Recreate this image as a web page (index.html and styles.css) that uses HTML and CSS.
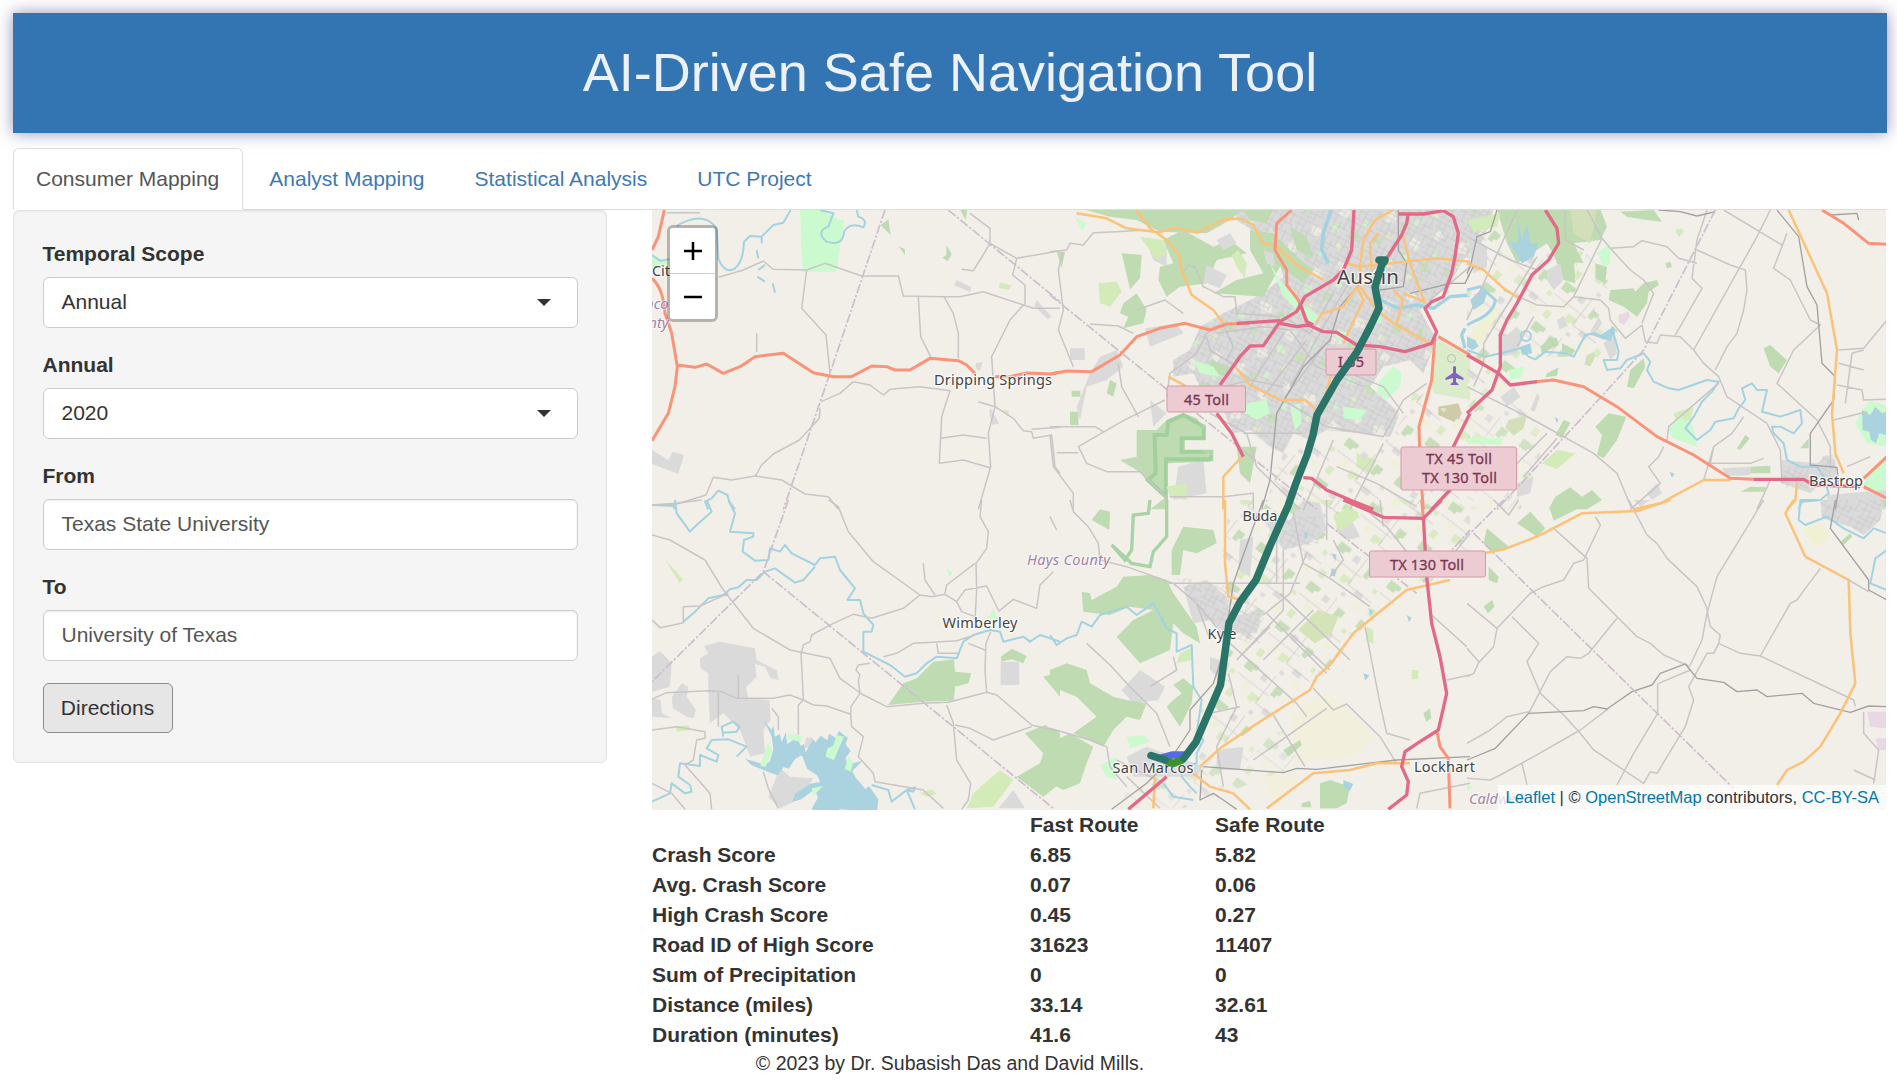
FILE: index.html
```html
<!DOCTYPE html>
<html lang="en">
<head>
<meta charset="utf-8">
<title>AI-Driven Safe Navigation Tool</title>
<link rel="stylesheet" href="styles.css">
</head>
<body>
<header class="banner"><h1>AI-Driven Safe Navigation Tool</h1></header>
<nav class="tabs">
  <a class="tab active">Consumer Mapping</a>
  <a class="tab">Analyst Mapping</a>
  <a class="tab">Statistical Analysis</a>
  <a class="tab">UTC Project</a>
</nav>
<main class="content">
  <form class="well">
    <div class="group"><label>Temporal Scope</label><div class="control select"><span>Annual</span><i class="caret"></i></div></div>
    <div class="group"><label>Annual</label><div class="control select"><span>2020</span><i class="caret"></i></div></div>
    <div class="group"><label>From</label><div class="control field">Texas State University</div></div>
    <div class="group"><label>To</label><div class="control field">University of Texas</div></div>
    <button type="button" class="btn">Directions</button>
  </form>
  <section class="results">
    <div class="map">
      <svg class="tiles" viewBox="652 210 1234 600" width="1234" height="600">
        <defs>
          <pattern id="streets" width="76" height="60" patternUnits="userSpaceOnUse" patternTransform="rotate(27)">
            <path d="M0 6H76M0 24H30M30 38H76M0 52H48M12 0V52M30 6V60M48 24V60M64 0V38" class="st"/>
          </pattern>
          <pattern id="patches" width="230" height="200" patternUnits="userSpaceOnUse" patternTransform="rotate(24)">
            <path d="M10 20l34-8 12 26-30 14zM120 60l30 4-6 30-28-8zM60 150l26-6 14 22-30 12zM180 10l24 6-8 24-20-6z" fill="#ecebe2"/>
            <path d="M70 30l22-8 8 20-18 10zM170 120l26-10 10 24-24 12zM20 100l18 4-4 22-18-6z" fill="#c8e0ba"/>
            <path d="M110 120l20-6 10 20-22 8zM200 70l16 4-4 18-16-4zM110 5l16 4-6 16-14-4z" fill="#d0f2cd"/>
            <path d="M150 165l16 4-6 16-14-6zM50 75l14 6-6 14-14-6z" fill="#e3edc6"/>
          </pattern>
          <pattern id="fields" width="190" height="150" patternUnits="userSpaceOnUse" patternTransform="rotate(38)">
            <path d="M5 8h40v14l-12 4v10H5zM120 20h26v20l-10 4v10h-16z" fill="#c6dfb8"/>
            <path d="M70 80h34v16l-14 2v8H70zM10 110h20v25H10zM170 60h14v14h-14z" fill="#daebc3"/>
            <path d="M130 95h28v18h-28zM65 15h20v20H65zM100 125h14v12h-14z" fill="#dddcda"/>
            <path d="M35 65h20v24H35zM150 125h26v18h-26z" fill="#eff0d8"/>
            <path d="M0 60H120M100 0V100M100 100H190" class="st"/>
          </pattern>
        </defs>
        <rect x="652" y="210" width="1234" height="600" fill="#f2efe9"/>

        <!-- land cover, west -->
        <g transform="translate(640 200) scale(.33333)">
          <path class="park" d="M480 28H545L600 60H612L590 215H487zM36 170L88 185V205H36z"/>
          <path class="wood" d="M722 75L745 58L752 105zM775 138l20 10v18zM920 135l15 28-12 20-16-10 12-8zM960 28h22l-5 32z"/>
          <path class="town" d="M36 750L85 780L98 755L132 765L115 822L36 792zM950 240l45 22-5 14-48-20zM1190 300l45 50-12 8-40-40zM1008 490l20-4-8 26-14-6zM1052 625l25 45-20 5-10-40z"/>
          <path class="grass" d="M1080 248l34 8-8 14-30-6zM1088 628l20 6-5 16z"/>
        </g>
        <g transform="translate(640 500) scale(.33333)">
          <path class="town" d="M180 475L205 460 192 438 240 425 345 445 350 480 385 498 410 512 416 540 392 535 375 500 345 492 350 530 318 562 325 595 388 600 392 660 370 690 375 760 330 770 318 735 300 690 250 640 210 670 205 580 205 520 182 505zM36 470L60 452 95 490 90 560 36 575zM36 595L62 600 65 640 96 655 36 650zM96 590L125 550 145 560 140 590 168 630 160 655 140 650 98 625zM420 805L450 830 520 835 480 895 420 925 385 890zM500 710l25 14-5 22-28-4zM1082 485h56v70h-56zM1075 925L1120 870 1155 925z"/>
          <path class="water" d="M370 660l25 30 5-15 5 35 15-8 5 25 12-30 5 35 30-20 10 25 10-5 5 25 20-35-10-15 20 20 15-20 20 14 5-20 20 12 10-20 25 20 5-10-10 30 15 20-15 20 5 20 45-10-30 30 10 20 30 35 10-10 28 40-6 60-30 22-30-20-20-30-30-2-25 12-60-12 20-35-10-25-40 30-28 8 10-25 45-30 30-5-10-20-30-20-15-40-20 10-20 30-15-5-18 25-28-10-50-20-20-20 60 18 15-10 10-35-5-40z"/>
          <path class="park" d="M385 725l12 30-20 45-16-2zM440 700l50 10-10 15-35-8zM590 705l22 5-20 45-10 25-25-10 5-25 18-8zM625 770l15 15-8 30-18-8zM515 865l35-8-30 30zM1060 325l15 35-30-5zM920 205l18 15-10 10z"/>
          <path class="wood" d="M745 615L790 550 830 535 880 485 942 478 945 515 994 520 985 550 945 560 942 602 850 605zM1082 470L1115 446 1160 468 1150 490 1115 478 1085 485zM1210 530L1260 515V590zM1155 700L1215 675 1260 700V850L1210 890 1130 830 1200 790 1210 760z"/>
          <path class="grass" d="M1080 810L1120 840 1060 920 980 925 1000 880zM108 680l40-4 2 14-40 5zM840 880l35-12 15 14-30 8zM75 178l55 62-12 8z"/>
        </g>

        <!-- land cover, Austin corridor -->
        <g transform="translate(1050 200) scale(.33333)">
          <path class="town" d="M560 28H1330L1300 120 1240 180 1200 250 1110 330 1160 420 1120 520 1080 480 1000 500 960 560 1050 640 1020 710 930 700 830 690 780 720 730 700 700 760 660 740 600 690 550 700 510 610 450 560 430 520 370 530 370 480 420 450 450 380 520 340 640 280 700 230 680 140 560 60zM285 385L380 370 400 400 300 440zM150 470L200 450 220 500 170 540 110 560 90 660 80 620 120 520zM60 445h44v35H60zM290 130L350 140 350 200 310 180zM385 800L460 780 470 880 370 900zM350 640L300 600 310 680z"/>
          <path d="M560 28H1330L1300 120 1240 180 1200 250 1110 330 1160 420 1120 520 1080 480 1000 500 960 560 1050 640 1020 710 930 700 830 690 780 720 730 700 700 760 660 740 600 690 550 700 510 610 450 560 430 520 370 530 370 480 420 450 450 380 520 340 640 280 700 230 680 140 560 60z" fill="url(#patches)"/>
          <path d="M560 28H1330L1300 120 1240 180 1200 250 1110 330 1160 420 1120 520 1080 480 1000 500 960 560 1050 640 1020 710 930 700 830 690 780 720 730 700 700 760 660 740 600 690 550 700 510 610 450 560 430 520 370 530 370 480 420 450 450 380 520 340 640 280 700 230 680 140 560 60z" fill="url(#streets)"/>
          <path class="wood" d="M100 28H580L540 60 470 100 330 95 260 60 180 50zM340 120L400 90 490 140 540 120 590 160 500 180 470 250 390 260 350 290 325 240 330 200 370 190zM215 160L275 165 270 235 240 268zM220 310L260 280 290 330 280 370 220 385 235 350 210 340zM20 155h25l-10 50zM600 90L670 100 740 170 790 210 760 250 690 200 640 290 490 280 560 240 640 220 600 150zM580 30H670L650 70 600 60zM720 80l50 30 20 60-50-20zM65 572h26v18H65zM60 635h25v40H60zM180 540l20 10-10 40-20-10zM480 480l60 20-10 30-50-15z"/>
          <path class="town" d="M470 195l60 30-20 40-50-20zM640 150l30 10 5 40-25-10zM500 120l40-20 20 30-40 20z"/>
          <path class="wood" d="M260 690H320L350 660 400 640 440 655 465 690V720H405V750H455L488 770 480 785 350 790V900L290 845 275 820 210 780 260 770zM560 740L620 740 600 850 570 820zM300 928L350 890V928z"/>
          <path class="reserve" d="M314 705H350L355 665 400 645 462 680V715H395V755H484V778H348V890L294 840 317 820z"/>
          <path class="grass" d="M145 250L200 245 215 275 180 320 150 310zM545 165L565 150 590 190 585 235 560 200zM270 110L340 120 350 160 320 180zM350 860L410 850 410 900 360 890zM920 760l60 20-20 40-40-20z"/>
          <path class="park" d="M660 190L690 240 740 300 810 350 790 370 740 330 700 290zM590 610L650 600 660 640 620 660 585 640zM990 540L1030 500 1055 520 1050 560 1010 600 980 580zM720 620l30-10 5 60-20 20zM880 620l70 10-20 30-50-5zM430 480l60 20 20 30-60-10zM860 390l40 10-10 25-30-10zM75 50l35 20-15 22z"/>
          <path d="M1165 420L1260 470V600L1150 580 1140 520z" fill="#dbeccb"/><path d="M1165 620l60-10 10 30-15 30-55-25z" fill="#cfcba7"/>
          <path d="M700 760L850 700 1020 720 1060 650 1100 560 1160 620 1260 640V928H640z" fill="url(#fields)"/>
          <path class="river" style="stroke-width:11" d="M843 30 820 100 815 150 835 190"/>
          <path class="river" style="stroke-width:10" d="M990 300L1045 325 1100 315 1150 325 1200 290 1260 285M1245 385l-10 20 10 40"/>
        </g>
        <g transform="translate(1050 500) scale(.33333)">
          <path d="M540 0H1260V200L1100 260 940 380 830 510 720 610 560 720 450 780 420 700 560 400 500 300z" fill="url(#fields)"/>
          <path d="M520 760L700 690 760 760 700 815 400 925H180L300 820z" fill="url(#fields)" opacity=".7"/>
          <path d="M720 640l110-60 60 40 80 90-60 60-170 20zM640 830l120-10-90 90z" fill="#f2f0dc"/>
          <path class="town" d="M400 260L470 240 530 290 540 350 640 330 620 400 530 400 480 360 430 370zM640 60L720 60 760 0 810 10 830 90 780 130 700 150zM570 120L610 110 600 230 565 210zM215 570L270 510 345 560 325 600 250 610zM30 760l50-30 15 15-50 40zM500 750l80-10-10 70H500zM230 770L290 740 460 800 440 830 250 830zM860 60l50 10 20 40-40 10-30-25zM480 470l60 20-20 60-40-40z"/>
          <path d="M380 230L540 260 650 340 600 430 480 380zM660 50H810V130L700 150z" fill="url(#streets)"/>
          <path class="wood" d="M95 275L120 280 125 300 200 260 220 230 300 225 350 240 370 280 440 380 450 430 400 400 370 370 360 450 270 490 200 410 250 360 310 330 240 320 180 345 100 335zM0 510L50 490 110 510 120 550 190 590 230 600 290 610 270 660 230 650 190 690 160 740 70 700 140 650 80 590 30 570 0 550zM370 600L395 580 370 555 400 535 430 560 425 610 390 680 350 620zM0 730L60 700 130 740 110 790 90 850 40 870 0 850zM810 850L840 840 900 860 890 910 860 925H810zM125 60L150 28 180 35 178 90zM365 150L400 80 490 90 500 130 440 160 400 150 390 225H365zM1120 640l20-15 4 30-15 10zM700 750l50-30 5 15-40 35zM755 910l25-8 5 20h-30z"/>
          <path d="M745 390l60-60 60 20-20 50-50 30z" fill="#d5e3b8"/>
          <path class="grass" d="M850 50L900 15 930 50 870 95zM390 460L430 440 425 480 380 490zM1085 510h20v28h-20zM950 380l20 10v42l-20-10z"/>
          <path class="park" d="M150 795L200 770 200 840 170 830zM230 710l50-5 20 20-60 20z"/>
          <path class="reserveline" d="M300 0L295 40 250 45 245 150 225 180 185 135 245 190 300 200 310 155 350 110 350 0"/>
          <path class="water" d="M845 205l15 5-5 20-14-4zM845 160l15 4-4 20zM955 325l15 8-8 14zM1070 345l15 8-8 14zM940 520l18 6-12 16zM880 840l30 12-10 20-20-10zM760 95l14 8-6 16z"/>
          <path class="river" d="M0 405L20 435 50 415 80 405 95 365 125 380 150 345 230 320 260 345 310 310 350 385 380 400V455L425 435 430 560 455 600 440 700 460 720 440 760 440 790 400 800 395 830 420 860 440 880M340 850L370 890 430 900"/>
        </g>

        <!-- land cover, east -->
        <g transform="translate(1467 200) scale(.33333)">
          <path d="M0 60H240L330 120 430 250 380 330 450 390 440 470 180 470 100 560 0 560z" fill="url(#fields)"/>
          <path d="M0 560L100 520 240 720 160 928H0z" fill="url(#fields)" opacity=".8"/>
          <path class="wood" d="M90 28H400L420 80 400 120 320 130 350 190 270 180 240 130 150 190 120 130zM250 140L320 170 325 250 290 240zM430 270L500 265 505 275 530 250 570 240 575 255 545 275 540 310 510 350 470 320 425 300zM385 190L420 200 415 250 385 235zM480 560L490 510 530 475 535 500 500 565zM385 680L425 640 478 650 450 720 410 775 390 765 405 705zM265 705L290 660 310 668 285 715zM245 928L265 890 310 862 345 890 375 870 405 900 360 928zM890 445L910 435 960 480 935 520 910 500zM810 745L835 705 848 715 820 750zM850 800L910 797V820H850zM820 875L850 860 900 862 890 875zM460 35L560 30 585 65 540 60 480 50zM595 190l15-5 5 15-15 5zM1000 745l25-30v30zM220 440l30-30 20 5 5 20-50 25zM285 430l40 20-10 15-30-15zM240 520l35-18-5 25-35 5z"/>
          <path d="M310 30L390 28 370 130 320 100zM360 465l20-8 5 12-15 30-18-5zM125 660l55-15-10 40-30 22-25-25z" fill="#d3dfb8"/>
          <path class="grass" d="M225 790L270 750 325 760 270 808zM620 640L680 620 670 660 630 670zM0 60L100 40 90 80 20 95zM945 800l80 5 10 35-70 5zM625 90l20-5 5 12-15 15z"/>
          <path class="park" d="M600 690L640 650 680 680 690 740 620 715zM390 160L430 130 430 190 410 200zM125 510L170 500 165 530 130 540zM1180 640L1210 600 1260 620V740L1200 730 1165 670zM1190 850L1260 760V885L1200 870zM0 715L110 715 100 735 0 730z"/>
          <path class="town" d="M240 210L280 190 290 240 260 270 240 240zM410 430L440 400 450 460 430 480zM370 395L395 350 405 370 380 410zM100 590L140 560 160 590 120 620zM150 850L200 830 190 880 150 890zM0 100L60 140 60 200 20 220zM100 420l50-40 20 30-20 50-50 10zM270 360l20-12 12 30-25 10zM190 630l20-50 8 10-15 45zM540 880l30-30 15 30-30 20zM765 805L850 800 850 825 780 828zM945 780L1050 790 1080 765 1105 780 1110 860H1050L1030 880 945 850zM1080 885L1260 870V928H1080z"/>
          <path d="M455 345l30-10 5 15-20 25-15-10z" fill="#e8d8e6"/>
          <path d="M0 420L70 320 100 330 60 400 30 440z" fill="#f0f0d2"/>
          <path d="M1065 765h45v70h-45zM945 800h80v65h-80z" fill="url(#streets)"/>
          <path class="water" d="M150 50L165 120 180 70 190 130 215 130 200 170 165 190 125 125 155 130zM1185 630l25 15 15-25 20 20 12-5v70l-20-5-10 30-15-10-5-25-20-5zM160 440l30-10 5 30-30 5zM360 400l40 5 40-25 5 20-30 20zM608 815l15 6-8 12zM262 650l12 8-4 12zM10 300l30-30 20 10-10 30-30 20zM0 410l25 10 10 20-20 10-15-10z"/>
          <circle class="river" cx="177" cy="408" r="15"/>
          <path class="river" style="stroke-width:9" d="M0 270L40 260 85 300Q80 340 20 365L0 375"/>
          <path class="river" d="M0 450L55 470 120 455 160 445 185 470 205 478 235 455 295 460 320 470 355 405 385 400 430 420 435 385 455 455 450 480 410 480 420 510 460 505 480 480 530 460 550 485 540 510 560 545 605 565 635 570 720 540 755 545 735 575 705 605 680 650 655 685 690 720 730 690 745 665 800 655 815 625 835 600 825 565 855 550 870 570 900 570 885 635 940 650 1000 630 1005 670 980 700 940 680 915 680 920 700 950 730 960 780 1000 800 1050 800 1070 830 1085 880 1060 900 1005 905 995 928"/>
        </g>
        <g transform="translate(1467 500) scale(.33333)">
          <path class="wood" d="M250 30L260 0H360L325 30 260 62zM50 130L60 85 95 115 125 140 80 155zM150 70L190 35 235 85 210 110zM65 200l30 30-5 20-25-10zM50 320l25-20 8 20-20 20zM1120 125l30-25 5 10-25 25zM1240 0h20v20h-20z"/>
          <path class="town" d="M1060 0H1250L1240 60 1190 105 1150 80 1065 55zM500 0h50l-30 20z"/><path d="M1060 0H1250L1240 60 1190 105 1150 80 1065 55z" fill="url(#streets)"/>
          <path d="M1200 635h60v50l-50-5zM1225 715h35v35h-25z" fill="#e8d8e6"/><path d="M1000 90l60-20 30 40-40 30z" fill="#f0f0d2"/>
          <path class="park" d="M0 852l18 8-18 15z"/>
          <path class="river" d="M1055 0L1000 0 995 60 1015 75 1080 50 1130 85 1190 115 1220 85 1260 100M1260 150L1225 175 1210 250 1260 270"/>
        </g>

        <!-- streams and roads, west -->
        <g transform="translate(640 200) scale(.33333)">
          <path class="river" d="M36 165L60 182 88 178M110 78Q190 30 230 85L235 175Q255 225 285 205Q310 185 312 125L330 108 365 110 400 75 430 68 452 30M365 110V130M350 150L355 175M355 210L375 195M352 230L375 245M398 250L405 278M540 30L580 40 565 80Q525 95 560 125Q610 140 612 95Q630 65 670 82Q685 60 655 50L650 30M205 928L195 905 215 895 235 872 262 885 268 905 285 928M36 915L100 918 105 928"/>
          <path class="minor" d="M236 232L310 210 370 183 400 208 500 210 555 190 665 228 775 228 790 288 910 290 960 290 1030 275 1180 325H1260M500 210L485 325 558 405 570 520M835 290L842 410 872 470M912 290L940 340 955 400V475M990 40L1050 85V130L1020 180 1000 212 965 208M1050 130L1130 175 1260 152M1130 175L1118 225 1155 255V310L1110 360 1055 470 1065 620 1045 700 1052 800 1015 928M1065 620L1120 655 1150 692 1175 695 1180 715 1235 705 1245 800 1260 820M640 545L690 555 730 585 750 568 840 560 930 572 905 650 898 790 970 780 1050 803M902 715L970 705 1040 715M1015 605L1065 620M1175 688L1260 682M640 545L600 580 543 605M540 625L538 655 478 720 400 762 365 795 345 830M36 915L110 912 198 885 220 832 275 840 345 828 425 840 495 882 565 890 595 928M350 400V455M80 38H180"/>
          <path class="admin" d="M735 30L570 520 430 928M925 30L1260 305"/>
          <path class="trunk" d="M73 30L55 110 36 150M36 235Q70 265 75 340L95 400 112 500 105 560 85 640 36 722M112 495L165 502 200 492 250 520 300 500 345 470 430 460 520 518 580 530H635L695 498 740 500 765 510H810L870 475 955 482 980 495 1005 520M1065 530H1110L1160 519 1230 522 1260 517"/>
        </g>
        <g transform="translate(640 500) scale(.33333)">
          <path class="river" d="M105 0L110 40 150 95 170 75 215 35 200 0M265 0L285 40 270 95 340 100 340 110 312 120 308 155 345 182 385 180 390 145 420 155 435 135 455 160 525 195 540 175 585 170 600 210 645 265 622 300 660 300 670 340 700 375 695 395H670V455L750 495 795 530 830 520 860 490 890 470 950 475 970 425 1000 405 1050 390 1080 395 1090 425 1150 410 1170 425 1200 405 1260 425M375 215L405 205 465 248 490 240 525 200M375 215L350 240 320 240 295 262 270 268 250 285 205 295 165 335 130 365M36 905L90 880 95 850 135 880 155 875 150 855 115 830 120 790 180 798 180 765 230 785 235 765 200 745 215 720 265 718 320 740 290 770M250 710L245 680 280 665 298 680 290 695 250 698M695 855L745 870 755 905 800 870 825 862 820 875 800 870 825 928"/>
          <path class="minor" d="M36 15L110 10 185 0M36 105L90 120 195 180 250 270 340 385 450 450 570 475 600 535 665 582 740 620 850 610 925 607 1040 577 1070 585 1175 675 1260 695M565 0L595 20 625 95 700 185 840 285 875 290 915 283 950 305 965 335 1005 350M1025 0L1020 50 1045 95 1040 145 1008 190 1010 270 1005 360M850 190L855 240 885 285M915 280L920 255 1005 190M950 305L975 270 1040 258 1075 330M1075 335L1120 298 1190 325 1200 255 1240 215M36 360L60 383 100 375 130 368V320L180 318 265 280M485 455L490 435 510 425 515 405 580 370 640 343 695 355 790 325 840 285M483 455L490 600 475 615V705M36 597L80 578 205 572 245 575 290 595H400L450 585 490 600 520 615 560 618 632 643 633 620 660 580 655 540 660 525 648 510 655 495 690 490M632 643L635 680 670 710 655 770 700 820 705 845 850 870 910 925M730 470L770 460 820 430 880 427 950 422 1005 405M890 430L895 460H960M985 430L1035 450M1052 395L1038 430 1035 510 1040 577M920 615L940 670 950 780 992 850 985 900 965 928M945 675L990 685 1060 720 1175 680M36 690L110 680 195 695V715L170 720 160 780 135 795 210 880 215 928M370 815L385 865 415 925M36 850L95 880 135 928M295 525V595M235 580V680M395 625L415 650V690"/>
          <path class="admin" d="M445 0L370 215 36 545M370 215L1240 925"/>
        </g>

        <!-- roads, Austin -->
        <g transform="translate(1050 200) scale(.33333)">
          <path class="minor" d="M0 155L50 150 60 130 100 135 130 98 200 95 280 90M40 150L25 210 40 330 25 390 70 500M120 372L205 378 250 400M205 490L215 560 265 650M0 680H135L160 695M345 600L220 662 85 740 110 790 170 815H270L350 895M0 705L10 800 70 880V928M20 758H85M350 590L360 520 440 460 470 400 520 370M400 215L415 195 435 200 460 260 520 290 555 290 560 340 690 350M560 500L480 450 470 410M520 375L550 440 530 480 600 540 700 560M700 400L600 560M770 420L640 590M820 440L700 600 830 680M900 240L720 560M1040 130L980 250M1260 200L1140 300M480 640L590 700 620 800 750 928M580 700L760 700M950 400L900 520 1000 560 1060 640M830 680L1000 710 1060 600 1130 550M850 280L780 400 700 350M760 930L850 720M900 928L1000 730M1100 920L980 850 860 800M360 890H520L610 880 610 928M260 330L345 300 400 340M500 400L640 380 720 390 800 500 940 560M600 540L520 560"/>
          <path class="rail" d="M1045 30V150L1070 190 1060 260 990 270M930 250L870 320 840 420 760 500 680 640 660 840 635 928M1080 280L1200 250 1245 250 1270 200"/>
          <path class="admin" d="M0 285L340 560 540 720 800 928"/>
          <path class="primary" d="M80 40L170 55 230 85 325 97 380 83 440 98 520 60 570 55 610 75 640 130 675 135 740 195 820 240M258 30L300 85 350 120 385 160 395 210 425 285 490 330 520 370M355 530L410 560M560 505L600 555 690 600H765L800 630M520 928V830L580 765M1030 30L975 60 940 120 930 200 930 260 980 330 1030 370 1140 430M985 100L960 130 965 210M1060 110L1080 190 1125 310M890 190L930 200 1160 175 1260 185M820 340L880 320 920 260 940 300 880 430M820 335L800 365M1030 270L1060 300 1040 370M1060 280L1125 305M850 500L820 610"/>
          <path class="trunk" d="M0 523L50 513 125 515 210 465 260 410 330 385 405 370 480 390 530 372 600 370M725 30L680 70 675 150 710 210 710 255 745 300 770 365M1165 410L1260 465M1155 410L1145 540 1107 680 1110 800 1120 928"/>
          <path class="mway" d="M560 370L690 362M690 370L740 380 775 375 820 395 860 397 920 435 990 440 1065 455 1145 430 1160 395 1125 325 1145 305 1180 290 1205 220 1215 170 1225 100 1210 50 1180 32 1120 42 1045 42M1075 40L1070 70 1055 105 1000 190M912 30L905 150 880 210 850 240 765 290 740 335 690 365 640 437 600 438 570 470 510 555M750 310L770 365 790 375M500 640L545 700 580 770M760 833L785 835 830 870 900 900 970 928M1260 640L1210 740 1200 870 1145 928"/>
        </g>
        <g transform="translate(1050 500) scale(.33333)">
          <path class="minor" d="M60 0L70 35 115 80 145 130 150 180 230 200 370 250 440 310 540 430M355 250H750M440 310L480 420M540 430L740 610 770 650M110 430L180 495 240 560 320 640 360 740M370 470L380 510 300 560M0 685L120 720 170 740 180 800 230 860M640 345L720 280 770 160M700 150V330L560 480M830 0V120M680 100V250M730 40L760 190 840 235 960 320M850 120L880 180 840 230M960 40L1010 80 1090 180M690 280L900 480M790 330L640 480M650 340L830 520M560 480L660 380M840 510L720 400M945 380L990 610 1010 700 1080 720M790 565L850 630 890 612 990 710 1040 790M830 625L610 780M670 645L765 800M535 520L560 620 500 740 520 860M1145 345L1250 440M1180 200L1260 100M1000 80L990 0M0 50L20 90M1190 540L1260 525M480 640L570 620M230 830L330 925M200 780L320 840M1100 925L1110 880 1260 850"/>
          <path class="rail" d="M640 0L610 80 550 250 520 460 490 550 420 630 420 690 360 780 290 850 185 928M460 800L700 818 740 805 800 808 1040 780 1260 770M455 810L450 900 490 880 520 900 560 928"/>
          <path class="admin" d="M830 70L1100 280M1120 245L1260 90"/>
          <path class="primary" d="M525 0V190L535 290 570 300M310 925L315 830M430 820L480 860 550 880 600 928M650 925L790 820 900 810 980 790H1080M450 800L510 745 630 665 780 570 800 530 840 495 910 400 1070 270 1200 240"/>
          <path class="trunk" d="M1115 0L1120 50M1160 690L1170 740 1195 775 1200 925"/>
          <path class="mway" d="M235 928L350 830M880 0L970 38 1000 52 1120 55 1175 0M1120 50L1130 230 1145 370 1170 470 1190 580 1165 690 1110 725 1065 755 1055 800 1075 845 1070 885 1015 928"/>
        </g>

        <!-- roads, east -->
        <g transform="translate(1467 200) scale(.33333)">
          <path class="minor" d="M150 30L0 360M360 30L405 115 320 290 290 320 210 315M0 110L130 180 210 210M405 115L430 145 500 140 525 122 600 140 635 175 690 190M430 145L490 210 530 240 560 280 525 370M210 315L110 270M320 290L400 300 425 325 430 360 475 415 525 375 535 425 570 430 580 405 640 410 680 450 710 490 755 530 780 590 900 670 940 750 945 850M720 30L690 120 675 235 705 265 625 405M690 150L790 195 835 210 840 270 830 330 810 400 780 440 745 510M910 30L870 110 680 450M770 30L945 135M960 100L920 205 970 240 1030 360 1060 375 980 450 930 550 1050 660 1090 740V800M755 550L650 640 605 680 600 720M830 650L795 700 740 740 730 790H850L890 775M740 740L710 840M590 740L575 770 545 800 580 850 490 928M0 560L200 660 380 760 450 820 495 928M50 490L20 560M270 715L170 830M240 700L140 800M1115 450L1190 445 1260 360M1115 490L1190 510M1110 555L1185 570 1190 600 1260 598M1190 450L1155 460 1135 610M1100 660L1200 635M1140 800L1210 770M910 840L870 928M210 170L50 430 50 490M295 30V120L350 150M200 350L150 440"/>
          <path class="rail" d="M90 30L70 95 30 110 10 200 0 220M575 30L640 35 690 48 745 35M930 30L995 110 1020 260 1050 315 1065 490 1105 530 1100 600 1030 700V795L1110 802 1115 870 1105 928M1090 45L1170 40 1175 60"/>
          <path class="admin" d="M745 30L530 450 330 670 90 928"/>
          <path class="primary" d="M0 190L50 210 110 265 155 295M965 30L1080 280 1110 450 1095 640 1105 760 1130 820M500 928L580 910 710 840 790 840M990 850L985 900 960 928"/>
          <path class="trunk" d="M0 465L50 490M205 545L260 540 350 560 450 620 570 710 680 765 790 835 860 838M1190 835L1260 770M1190 860L1260 895M1065 30L1130 70 1205 130 1260 133"/>
          <path class="mway" d="M0 465L95 520 130 555 210 545M235 30L270 85 275 130 245 180 195 225 150 310 120 360 100 405V500L75 570 0 640M860 838H1010L1040 855 1180 860"/>
        </g>
        <g transform="translate(1467 500) scale(.33333)">
          <path class="minor" d="M260 85L360 175 365 265 510 410 550 430 590 465 670 500M485 0L540 105 570 130 600 175 690 260 718 320 730 380 760 405 755 430 820 460 880 468 1160 600 1165 620M890 0L750 230 720 340 705 420 670 495M385 50L400 75 350 180 320 190 290 240 225 262 190 280 90 385 80 440 35 488 20 520 0 530M0 310L90 385M0 445L38 488M135 350L215 430 180 485 220 580 290 645 340 700 380 750 530 850 550 815 570 820 655 680 680 600 665 560 720 460 740 460 755 430M450 355L365 460 340 475 300 470 250 515 185 640M185 635L120 650 70 690 0 730M425 625L340 690 200 770 100 825 70 840 0 835M165 790L180 855M572 550V640L500 760 450 855M670 510L575 550M1060 205L1015 265 990 300 970 310 880 468M1190 635V700L1235 750 1220 850M1145 240L1205 275M1160 810L1225 840M80 0L125 45 155 0"/>
          <path class="rail" d="M1105 0L1090 85 1205 240V270L1260 300M0 780L85 745 185 640 350 632 380 620 420 627 495 575 555 555 580 520 655 492 690 535 770 547 810 575 870 570 900 590 1005 580 1040 610 1150 637 1205 618 1260 620"/>
          <path class="admin" d="M110 0L15 95 800 865"/>
          <path class="primary" d="M50 160L110 148 210 110 345 40 510 33 610 0M980 0L955 40 1015 170 1145 240 1150 400 1165 550 1120 640 1060 740 1010 785 960 810 930 855"/>
        </g>

        <!-- highway shields -->
        <g class="shield">
          <rect x="1167" y="386" width="78.500" height="26" rx="2"/><rect x="1326" y="349" width="50" height="26" rx="2"/>
          <rect x="1401" y="447" width="115.500" height="43" rx="2"/><rect x="1369.500" y="551" width="116" height="26" rx="2"/>
        </g>
        <g class="shieldtext">
          <text x="1184" y="404.500" textLength="45">45 Toll</text><text x="1338" y="367" textLength="26">I 35</text>
          <text x="1426" y="464" textLength="66">TX 45 Toll</text><text x="1422" y="482.500" textLength="75">TX 130 Toll</text>
          <text x="1390" y="570" textLength="74">TX 130 Toll</text>
        </g>
        <g class="place">
          <text x="934" y="385" textLength="118">Dripping Springs</text>
          <text x="942.500" y="628" textLength="75">Wimberley</text>
          <text x="1242.500" y="521" textLength="35">Buda</text>
          <text x="1207.500" y="639" textLength="29">Kyle</text>
          <text x="1112.500" y="773" textLength="81">San Marcos</text>
          <text x="1414" y="772" textLength="61">Lockhart</text>
          <text x="1809" y="486" textLength="54">Bastrop</text>
          <text x="640" y="276">a City</text>
          <text class="city" x="1337" y="284" textLength="62">Austin</text>
        </g>
        <g class="county">
          <text x="1027" y="565" textLength="83">Hays County</text>
          <text x="637" y="309">anco</text><text x="632" y="328">ounty</text>
          <text x="1469" y="804">Caldwell</text>
        </g>
        <path transform="translate(1454.500 375)" fill="#8461c4" d="M-1.500-8Q0-10 1.500-8V-2L9 3V5L1.500 3V7L4 9V10H-4V9L-1.500 7V3L-9 5V3L-1.500-2z"/>
        <circle cx="1451.500" cy="358.500" r="4" fill="none" stroke="#bbb"/>

        <!-- routes -->
        <path class="route fast" d="M1161 758L1172 755 1185 755"/>
        <path class="route green" d="M1165 760L1173 763.500 1182 760"/>
        <path class="route" d="M1151 755.500L1165 760M1184 758L1196 742 1208 714 1220.500 685 1224 660 1229 623 1240 602 1256 580 1270 546 1288 506 1296 483 1307 455 1313 435 1317 415 1337 380 1357 352 1371 325 1379 308 1375 287 1382 264 1384 262 1379 260 1385 260"/>
      </svg>
      <div class="zoom"><a><svg width="18" height="18"><path d="M9 0V18M0 9H18"/></svg></a><a><svg width="18" height="18"><path d="M0 9H18"/></svg></a></div>
      <div class="attribution"><a>Leaflet</a> | © <a>OpenStreetMap</a> contributors, <a>CC-BY-SA</a></div>
    </div>
    <table class="scores">
      <tr><th></th><th>Fast Route</th><th>Safe Route</th></tr>
      <tr><th>Crash Score</th><th>6.85</th><th>5.82</th></tr>
      <tr><th>Avg. Crash Score</th><th>0.07</th><th>0.06</th></tr>
      <tr><th>High Crash Score</th><th>0.45</th><th>0.27</th></tr>
      <tr><th>Road ID of High Score</th><th>31623</th><th>11407</th></tr>
      <tr><th>Sum of Precipitation</th><th>0</th><th>0</th></tr>
      <tr><th>Distance (miles)</th><th>33.14</th><th>32.61</th></tr>
      <tr><th>Duration (minutes)</th><th>41.6</th><th>43</th></tr>
    </table>
  </section>
</main>
<footer class="footer">© 2023 by Dr. Subasish Das and David Mills.</footer>
</body>
</html>
```
FILE: styles.css
```css
* { box-sizing: border-box; }
body {
  margin: 0;
  padding: 13px 10px 0 13px;
  height: 1086px;
  overflow: hidden;
  background: #fff;
  color: #333;
  font: 21px/30px "Liberation Sans", Arial, sans-serif;
}
.banner {
  height: 120px;
  display: flex;
  justify-content: center;
  background: #3375b3;
  box-shadow: 0 0 15px rgba(40, 40, 110, .5);
}
.banner h1 {
  margin: 0;
  padding-top: 29px;
  font-size: 54px;
  line-height: 60px;
  font-weight: 400;
  color: #ebf1f7;
}
.tabs {
  display: flex;
  gap: 3px;
  margin-top: 15px;
  height: 62px;
  border-bottom: 1px solid #ddd;
}
.tab {
  height: 62px;
  padding: 15px 22.5px;
  border: 1px solid transparent;
  border-radius: 6px 6px 0 0;
  color: #3f78b3;
  white-space: nowrap;
}
.tab.active {
  padding-left: 22px;
  color: #555;
  background: #fff;
  border-color: #ddd #ddd #fff;
}
.content { display: flex; justify-content: space-between; }
.well {
  width: 594px;
  height: 553px;
  padding: 27.5px 28.5px;
  background: #f5f5f5;
  border: 1px solid #e3e3e3;
  border-radius: 6px;
  box-shadow: inset 0 1px 2px rgba(0, 0, 0, .05);
}
.group { margin-bottom: 22px; }
.group label { display: block; font-weight: 700; margin-bottom: 8px; }
.control {
  height: 51px;
  padding: 0 18px;
  display: flex;
  align-items: center;
  background: #fff;
  border: 1px solid #ccc;
  border-radius: 6px;
}
.select { justify-content: space-between; padding-right: 26px; }
.field { color: #555; box-shadow: inset 0 1px 2px rgba(0, 0, 0, .08); }
.caret { border: 7px solid transparent; border-top: 7px solid #333; border-bottom: 0; }
.btn {
  display: block;
  height: 50px;
  width: 130px;
  padding: 0;
  font: inherit;
  color: #333;
  background: #e6e6e6;
  border: 1px solid #8c8c8c;
  border-radius: 6px;
}
.results { width: 1234px; margin-right: 1px; }
.map { position: relative; height: 600px; overflow: hidden; }
.map, .tiles { display: block; }
.zoom {
  position: absolute;
  left: 15px;
  top: 15px;
  width: 51px;
  border: 3px solid rgba(0, 0, 0, .25);
  border-radius: 6px;
  background-clip: padding-box;
}
.zoom a {
  height: 45px;
  display: flex;
  align-items: center;
  justify-content: center;
  background: #fff;
}
.zoom a:first-child { height: 46px; border-bottom: 1px solid #ccc; border-radius: 3px 3px 0 0; }
.zoom a:last-child { border-radius: 0 0 3px 3px; }
.zoom path { stroke: #000; stroke-width: 2.5; }
.attribution {
  position: absolute;
  right: 0;
  bottom: 0;
  height: 25px;
  padding: 0 7px;
  font-size: 16.5px;
  line-height: 24px;
  background: rgba(255, 255, 255, .7);
  white-space: nowrap;
}
.attribution a { color: #0078a8; }
.scores { border-collapse: collapse; table-layout: fixed; width: 710px; }
.scores th { padding: 0; height: 30px; text-align: left; white-space: nowrap; }
.scores th:nth-child(1) { width: 378px; }
.scores th:nth-child(2) { width: 185px; }
.footer { text-align: center; line-height: 27px; font-size: 19.5px; }

/* map features */
.wood { fill: #bedbb2; }
.park { fill: #ccfacf; }
.grass { fill: #d3ebb8; }
.town { fill: #dadada; }
.water { fill: #aad3df; }
.reserve { fill: none; stroke: #94cc94; stroke-width: 12; stroke-opacity: .7; }
.reserveline { fill: none; stroke: #a8d3a3; stroke-width: 10; }
.river { fill: none; stroke: #a3d2e1; stroke-width: 6; stroke-linejoin: round; }
.st { fill: none; stroke: #c6c3c6; stroke-width: 1.8; }
.minor { fill: none; stroke: #c9c5c6; stroke-width: 4.5; stroke-linejoin: round; }
.rail { fill: none; stroke: #a3a1a1; stroke-width: 4; stroke-linejoin: round; }
.admin { fill: none; stroke: #cdbdcd; stroke-width: 5; stroke-dasharray: 28 6 7 6; }
.primary { fill: none; stroke: #fbc27a; stroke-width: 7.5; stroke-linejoin: round; }
.trunk { fill: none; stroke: #fa9479; stroke-width: 9; stroke-linejoin: round; }
.mway { fill: none; stroke: #e36a87; stroke-width: 10; stroke-linejoin: round; }
.shield rect { fill: #eccbd2; stroke: #d599a8; }
.shieldtext { font: 400 14.5px "Noto Sans", sans-serif; fill: #7b3651; stroke: #7b3651; stroke-width: .3; }
.place { font: 14.5px "Noto Sans", sans-serif; fill: #444; stroke: #fff; stroke-opacity: .7; stroke-width: 2.5; paint-order: stroke; }
.place .city { font-size: 20.5px; }
.county { font: italic 14.5px "Noto Sans", sans-serif; fill: #a282aa; stroke: #fff; stroke-opacity: .6; stroke-width: 2; paint-order: stroke; }
.route { fill: none; stroke: #2a7567; stroke-width: 7.5; stroke-linecap: round; stroke-linejoin: round; }
.route.fast { stroke: #566be8; }
.route.green { stroke: #3d912e; }
```
